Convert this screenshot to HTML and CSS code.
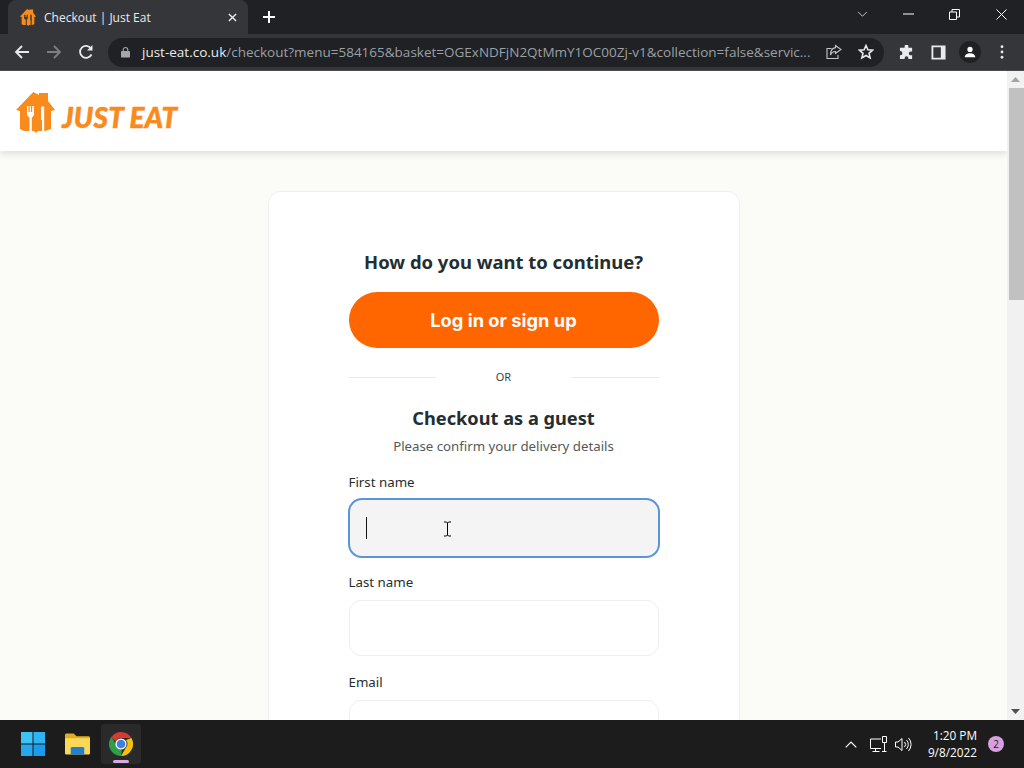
FILE: index.html
```html
<!DOCTYPE html>
<html lang="en">
<head>
    <meta charset="UTF-8">
    <title>Checkout | Just Eat</title>
    <link rel="stylesheet" href="styles.css">
</head>
<body>
    <!-- Browser tab strip -->
    <div class="tabbar">
        <div class="tab">
            <svg class="tab-icon" viewBox="0 0 39 41"><path fill="#f98a1c" d="M17.300 0L23 3V1h9v8l7 9-4 1v18l-6 2H22l-2 2-2-2H8l-4-2V19l-4-1z"/><path fill="#35363a" d="M10 14h2v6h1.500v-6h2v6h1.500v-6h2v9l-2.500 3V40h-2.500V26L10 23zM25 14h3.500v26H26V28h-1z"/></svg>
            <span class="tab-title">Checkout | Just Eat</span>
            <svg class="tab-close" viewBox="0 0 10 10"><path d="M1 1l8 8M9 1l-8 8" stroke="#e8eaed" stroke-width="1.600"/></svg>
        </div>
        <svg class="new-tab" viewBox="0 0 12 12"><path d="M6 0v12M0 6h12" stroke="#fff" stroke-width="2"/></svg>
        <div class="window-controls">
            <svg class="win-chevron" viewBox="0 0 12 8"><path d="M1 1l5 5 5-5" fill="none" stroke="#d8d9db" stroke-width="1"/></svg>
            <svg class="win-min" viewBox="0 0 11 2"><path d="M0 1h11" stroke="#fff" stroke-width="1"/></svg>
            <svg class="win-restore" viewBox="0 0 11 11"><path d="M.5 3h7v7.500h-7zM3 3V.5h7.500V8H8" fill="none" stroke="#fff" stroke-width="1"/></svg>
            <svg class="win-close" viewBox="0 0 11 11"><path d="M.5.5l10 10M10.500.5l-10 10" stroke="#fff" stroke-width="1"/></svg>
        </div>
    </div>

    <!-- Browser toolbar -->
    <div class="toolbar">
        <svg class="nav-icon nav-back" viewBox="0 0 16 16"><path d="M15 8H2M8 2L2 8l6 6" fill="none" stroke="#e8eaed" stroke-width="1.800"/></svg>
        <svg class="nav-icon nav-forward" viewBox="0 0 16 16"><path d="M1 8h13M8 2l6 6-6 6" fill="none" stroke="#7d7f83" stroke-width="1.800"/></svg>
        <svg class="nav-icon nav-reload" viewBox="0 0 16 16"><path d="M13.500 10.500A6 6 0 1 1 13 4.500" fill="none" stroke="#e8eaed" stroke-width="1.800"/><path d="M14.500 1v5.500H9z" fill="#e8eaed"/></svg>
        <div class="omnibox">
            <svg class="lock" viewBox="0 0 10 12"><path d="M2.500 5V3.500a2.500 2.500 0 0 1 5 0V5" fill="none" stroke="#a5a7aa" stroke-width="1.200"/><rect y="5" width="10" height="7" rx="1" fill="#a5a7aa"/></svg>
            <div class="url"><span class="url-host">just-eat.co.uk</span>/checkout?menu=584165&amp;basket=OGExNDFjN2QtMmY1OC00Zj-v1&amp;collection=false&amp;servic...</div>
            <svg class="omni-icon" viewBox="0 0 16 16"><path d="M5.500 4.500H1v10h11V11" fill="none" stroke="#c4c6c9" stroke-width="1.100"/><path d="M9.500 1.500l5.500 4-5.500 4V7.500C7 7.500 5.500 8.500 4.500 11 4.500 7 6.500 4 9.500 3.600z" fill="none" stroke="#c4c6c9" stroke-width="1.100"/></svg>
            <svg class="omni-icon omni-star" viewBox="0 0 16 16"><path d="M8 1.500l1.900 4.300 4.600.4-3.500 3.100 1.100 4.600L8 11.500l-4.100 2.400L5 9.300 1.500 6.200l4.600-.4z" fill="none" stroke="#e8eaed" stroke-width="1.600"/></svg>
        </div>
        <div class="toolbar-actions">
            <svg class="tool-icon" viewBox="0 0 16 16"><path fill="#e8eaed" d="M6 1.500a2 2 0 0 1 4 0V3h4v4h-1.500a2 2 0 0 0 0 4H14v4h-4v-1a2 2 0 0 0-4 0v1H1v-4h.8a2.300 2.300 0 0 0 0-4.500H1V3h5z"/></svg>
            <svg class="tool-icon" viewBox="0 0 16 16"><path fill="#e8eaed" d="M.5.5h15v15H.5zM2.500 2.500v11h8v-11z" fill-rule="evenodd"/></svg>
            <div class="avatar"><svg viewBox="0 0 16 16"><circle cx="8" cy="5" r="3" fill="#fff"/><path d="M2 14c0-3 3-4.500 6-4.500s6 1.500 6 4.500z" fill="#fff"/></svg></div>
            <svg class="tool-menu" viewBox="0 0 4 16"><circle cx="2" cy="2" r="1.600" fill="#e8eaed"/><circle cx="2" cy="8" r="1.600" fill="#e8eaed"/><circle cx="2" cy="14" r="1.600" fill="#e8eaed"/></svg>
        </div>
    </div>

    <!-- Page viewport -->
    <div class="viewport">
        <div class="page">
            <header class="site-header">
                <a class="logo">
                    <svg class="logo-mark" viewBox="0 0 39 41"><path fill="#f98a1c" d="M17.300 0L23 3V1h9v8l7 9-4 1v18l-6 2H22l-2 2-2-2H8l-4-2V19l-4-1z"/><path fill="#fff" d="M11 14h1.400v6h1.300v-6h1.200v6h1.300v-6H18v9l-2.200 3V40h-2.300V26L11 23zM25 14.500h3.200V40H26V28h-1z"/></svg>
                <span class="logo-text">JUST EAT</span>
                </a>
            </header>

            <main class="card">
                <h2 class="card-title">How do you want to continue?</h2>
                <button class="login-button" type="button">Log in or sign up</button>
                <div class="divider"><span>OR</span></div>
                <h2 class="guest-title">Checkout as a guest</h2>
                <p class="guest-note">Please confirm your delivery details</p>

                <form class="guest-form">
                    <div class="field">
                        <label for="first_name">First name</label>
                        <div class="input input-focused" id="first_name"><span class="caret"></span><span class="mouse-cursor"><svg viewBox="0 0 9 16"><path d="M1 1h2.500l1 1 1-1H8M4.500 2v12M1 15h2.500l1-1 1 1H8" fill="none" stroke="#000" stroke-width="1"/></svg></span></div>
                    </div>
                    <div class="field">
                        <label for="last_name">Last name</label>
                        <div class="input" id="last_name"></div>
                    </div>
                    <div class="field">
                        <label for="email">Email</label>
                        <div class="input" id="email"></div>
                    </div>
                </form>
            </main>
        </div>

        <div class="scrollbar">
            <div class="scroll-arrow"><svg viewBox="0 0 9 5"><path d="M4.500 0L9 5H0z" fill="#a3a3a3"/></svg></div>
            <div class="scroll-track"><div class="scroll-thumb"></div></div>
            <div class="scroll-arrow"><svg viewBox="0 0 9 5"><path d="M0 0h9L4.500 5z" fill="#505050"/></svg></div>
        </div>
    </div>

    <!-- Windows taskbar -->
    <footer class="taskbar">
        <div class="task-apps">
            <div class="task-app">
                <svg class="win-logo" viewBox="0 0 24 24"><path fill="#3cc3f5" d="M0 0h11.500v11.500H0z"/><path fill="#2fb4f3" d="M12.500 0H24v11.500H12.500z"/><path fill="#25a7ee" d="M0 12.500h11.500V24H0z"/><path fill="#1c9bec" d="M12.500 12.500H24V24H12.500z"/></svg>
            </div>
            <div class="task-app">
                <svg class="folder" viewBox="0 0 26 22"><path fill="#e0ae1e" d="M0 1.500C0 .7.700 0 1.500 0H9l3 3h12.500c.8 0 1.500.7 1.500 1.500V8H0z"/><path fill="#fbd858" d="M0 5h26v15.500c0 .8-.7 1.500-1.500 1.500h-23C.7 22 0 21.300 0 20.500z"/><path fill="#1f7fd0" d="M6 22v-6.500C6 14.700 6.700 14 7.500 14h11c.8 0 1.500.7 1.500 1.500V22z"/></svg>
            </div>
            <div class="task-app task-app-active">
                <svg class="chrome" viewBox="0 0 24 24"><path fill="#d93a2f" d="M12 0a12 12 0 0 1 10.400 6H12a6 6 0 0 0-5.600 3.800L2.500 4.700A12 12 0 0 1 12 0z"/><path fill="#f4c20d" d="M22.400 6A12 12 0 0 1 12 24l5-8.500A6 6 0 0 0 17 8z"/><path fill="#2f9e48" d="M2.500 4.700l5 8.700A5 5 0 0 0 13 17.800L12 24A12 12 0 0 1 2.500 4.700z"/><circle cx="12" cy="12" r="5.600" fill="#fff"/><circle cx="12" cy="12" r="4.300" fill="#3f7fe3"/></svg>
                <span class="app-indicator"></span>
            </div>
        </div>
        <div class="tray">
            <svg class="tray-chevron" viewBox="0 0 12 7"><path d="M.7 6.300L6 1l5.300 5.300" fill="none" stroke="#fff" stroke-width="1.200"/></svg>
            <svg class="tray-network" viewBox="0 0 17 16"><path d="M11 3H.5v9.500H11M5.500 12.500v2.500M2.500 15.500h7M12.500.5h4v6h-4zM14.500 6.500v9M12 15.500h4.500" fill="none" stroke="#fff" stroke-width="1"/></svg>
            <svg class="tray-volume" viewBox="0 0 17 15"><path d="M.5 5v5h2.500l4 3.500v-12L3 5z" fill="none" stroke="#fff" stroke-width="1"/><path d="M9.500 5a3.500 3.500 0 0 1 0 5M11.500 3a6.500 6.500 0 0 1 0 9M13.500 1a9.500 9.500 0 0 1 0 13" fill="none" stroke="#fff" stroke-width="1"/></svg>
            <div class="clock"><span>1:20 PM</span><span>9/8/2022</span></div>
            <div class="notify">2</div>
        </div>
    </footer>
</body>
</html>
```

FILE: styles.css
```css
* {
    box-sizing: border-box;
}
html, body {
    margin: 0;
    padding: 0;
    height: 768px;
    overflow: hidden;
}
body {
    display: flex;
    flex-direction: column;
    width: 1024px;
    font-family: "Noto Sans", Arial, sans-serif;
    background-color: #202124;
}
svg {
    display: block;
    flex-shrink: 0;
}

/* Tab strip */
.tabbar {
    display: flex;
    align-items: flex-end;
    height: 34px;
    padding-left: 8px;
    background-color: #202124;
}
.tab {
    display: flex;
    align-items: center;
    width: 240px;
    height: 34px;
    padding: 0 7px 0 12px;
    background-color: #35363a;
    border-radius: 8px 8px 0 0;
}
.tab-icon {
    width: 16px;
    height: 17px;
}
.tab-title {
    flex: 1;
    margin-left: 8px;
    font-family: "Open Sans", sans-serif;
    font-size: 12px;
    color: #e8eaed;
}
.tab-close {
    width: 9px;
    height: 9px;
    margin-right: 4px;
}
.new-tab {
    width: 12px;
    height: 12px;
    margin: 0 0 11px 15px;
}
.window-controls {
    display: flex;
    align-items: center;
    margin-left: auto;
    height: 28px;
    align-self: flex-start;
}
.win-chevron {
    width: 11px;
    height: 7px;
    margin-right: 35px;
}
.win-min {
    width: 11px;
    height: 2px;
    margin-right: 35px;
}
.win-restore {
    width: 11px;
    height: 11px;
    margin-right: 36px;
}
.win-close {
    width: 11px;
    height: 11px;
    margin-right: 17px;
}

/* Toolbar */
.toolbar {
    display: flex;
    align-items: center;
    height: 37px;
    padding-left: 14px;
    background-color: #35363a;
    border-bottom: 1px solid #4a4b4e;
}
.nav-icon {
    width: 16px;
    height: 16px;
}
.nav-forward {
    margin-left: 16px;
}
.nav-reload {
    margin-left: 16px;
}
.omnibox {
    display: flex;
    align-items: center;
    flex-shrink: 0;
    width: 776px;
    height: 29px;
    margin-left: 14px;
    padding-left: 13px;
    background-color: #202124;
    border-radius: 15px;
}
.lock {
    width: 9px;
    height: 12px;
}
.url {
    width: 670px;
    flex-shrink: 0;
    margin-left: 12px;
    margin-right: 14px;
    font-family: "Open Sans", sans-serif;
    font-size: 13.500px;
    color: #9aa0a6;
    white-space: nowrap;
}
.url-host {
    color: #e8eaed;
}
.omni-icon {
    width: 16px;
    height: 16px;
    margin-right: 16px;
}
.omni-star {
    margin-right: 10px;
}
.toolbar-actions {
    display: flex;
    align-items: center;
    margin-left: 15px;
}
.tool-icon {
    width: 15px;
    height: 15px;
    margin-right: 17px;
}
.avatar {
    display: flex;
    align-items: center;
    justify-content: center;
    width: 22px;
    height: 22px;
    margin-left: -4px;
    background-color: #202124;
    border-radius: 50%;
}
.avatar svg {
    width: 14px;
    height: 14px;
}
.tool-menu {
    width: 4px;
    height: 14px;
    margin-left: 19px;
}

/* Page */
.viewport {
    display: flex;
    height: 649px;
    background-color: #fbfbf7;
    overflow: hidden;
}
.page {
    flex: 1;
    display: flex;
    flex-direction: column;
    align-items: center;
    min-width: 0;
}
.site-header {
    flex-shrink: 0;
    width: 100%;
    height: 80px;
    padding: 21px 0 0 16px;
    background-color: #fff;
    box-shadow: 0 2px 8px rgba(0, 0, 0, 0.14);
}
.logo {
    display: flex;
    align-items: flex-start;
}
.logo-mark {
    width: 39px;
    height: 41px;
}
.logo-text {
    margin: 7px 0 0 7px;
    font-family: "Lato", sans-serif;
    font-size: 28px;
    line-height: 36px;
    font-weight: 900;
    font-style: italic;
    letter-spacing: 0.2px;
    color: #f98a1c;
    -webkit-text-stroke: 0.5px #f98a1c;
    white-space: nowrap;
}
.card {
    flex-shrink: 0;
    width: 472px;
    margin-top: 40px;
    padding: 56px 80px 0;
    background-color: #fff;
    border: 1px solid #efefec;
    border-radius: 12px;
}
.card-title {
    margin: 0;
    font-size: 18.450px;
    line-height: 28px;
    font-weight: 700;
    text-align: center;
    color: #242e30;
}
.login-button {
    display: block;
    width: 100%;
    height: 56px;
    margin-top: 16px;
    background-color: #ff6600;
    color: #fff;
    border: none;
    border-radius: 28px;
    font-family: "Inter", sans-serif;
    font-size: 18.300px;
    font-weight: 700;
}
.divider {
    display: flex;
    align-items: center;
    margin-top: 20px;
    font-size: 11px;
    line-height: 18px;
    color: #3c4547;
}
.divider span {
    padding: 0 60px;
}
.divider::before, .divider::after {
    content: "";
    flex: 1;
    height: 1px;
    background-color: #eaeaea;
}
.guest-title {
    margin: 19px 0 0;
    font-size: 18.200px;
    line-height: 26px;
    font-weight: 700;
    text-align: center;
    color: #242e30;
}
.guest-note {
    margin: 5px 0 0;
    font-size: 13.250px;
    line-height: 20px;
    text-align: center;
    color: #53595b;
}
.guest-form {
    margin-top: 17px;
}
.field {
    margin-bottom: 17px;
}
.field label {
    display: block;
    font-size: 13.300px;
    line-height: 18px;
    margin-bottom: 9px;
    color: #242e30;
}
.input {
    position: relative;
    height: 56px;
    background-color: #fff;
    border: 1px solid #efefec;
    border-radius: 12px;
}
.input-focused {
    display: flex;
    align-items: center;
    height: 60px;
    margin: -2px -1px -2px;
    padding-left: 16px;
    background-color: #f4f4f4;
    border: 2px solid #5b94d9;
    border-radius: 14px;
}
.caret {
    width: 1px;
    height: 22px;
    background-color: #111;
}
/* pointer sits over the field */
.mouse-cursor {
    position: absolute;
    left: 93px;
    top: 21px;
}
.mouse-cursor svg {
    width: 9px;
    height: 16px;
}

/* Scrollbar */
.scrollbar {
    display: flex;
    flex-direction: column;
    width: 17px;
    background-color: #f1f1f1;
}
.scroll-arrow {
    display: flex;
    align-items: center;
    justify-content: center;
    height: 17px;
}
.scroll-arrow svg {
    width: 9px;
    height: 5px;
}
.scroll-track {
    flex: 1;
}
.scroll-thumb {
    height: 212px;
    margin-left: 2px;
    background-color: #c1c1c1;
}

/* Taskbar */
.taskbar {
    display: flex;
    align-items: center;
    justify-content: space-between;
    height: 48px;
    padding: 0 0 0 13px;
    background-color: #1c1c1c;
}
.task-apps {
    display: flex;
    align-items: center;
}
.task-app {
    position: relative;
    display: flex;
    align-items: center;
    justify-content: center;
    width: 40px;
    height: 40px;
    margin-right: 4px;
    border-radius: 4px;
}
.task-app-active {
    background-color: #2b2a2b;
}
.win-logo {
    width: 24px;
    height: 24px;
}
.folder {
    width: 25px;
    height: 22px;
}
.chrome {
    width: 24px;
    height: 24px;
}
.app-indicator {
    position: absolute;
    left: 12px;
    bottom: 1px;
    width: 16px;
    height: 3px;
    background-color: #d7a9e3;
    border-radius: 2px;
}
.tray {
    display: flex;
    align-items: center;
}
.tray-chevron {
    width: 12px;
    height: 7px;
}
.tray-network {
    width: 17px;
    height: 16px;
    margin-left: 13px;
}
.tray-volume {
    width: 17px;
    height: 15px;
    margin-left: 8px;
}
.clock {
    display: flex;
    flex-direction: column;
    align-items: flex-end;
    margin-left: 16px;
    font-family: "Open Sans", sans-serif;
    font-size: 11.800px;
    line-height: 17px;
    color: #fff;
}
.notify {
    display: flex;
    align-items: center;
    justify-content: center;
    width: 16px;
    height: 16px;
    margin: 0 20px 0 11px;
    font-family: "Open Sans", sans-serif;
    font-size: 10px;
    color: #202020;
    background-color: #d7a0e0;
    border-radius: 50%;
}
```
